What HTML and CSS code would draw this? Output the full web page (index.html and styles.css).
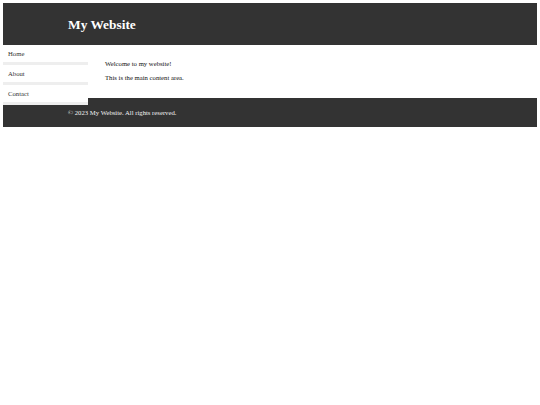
FILE: index.html
```html
<!DOCTYPE html>
<html lang="en">
<head>
<meta charset="utf-8">
<title>My Website</title>
<link rel="stylesheet" href="styles.css">
</head>
<body>
<header class="site-header">
  <h1 class="site-title">My Website</h1>
</header>
<nav class="sidebar">
  <ul class="nav-list">
    <li class="nav-item">Home</li>
    <li class="nav-item">About</li>
    <li class="nav-item">Contact</li>
  </ul>
</nav>
<main class="content">
  <p class="content-text">Welcome to my website!</p>
  <p class="content-text">This is the main content area.</p>
</main>
<footer class="site-footer">
  <p class="footer-text">&copy; 2023 My Website. All rights reserved.</p>
</footer>
</body>
</html>
```

FILE: styles.css
```css
html, body {
  background: #ffffff;
}
body {
  margin: 3px;
  font-family: "Liberation Serif", "Times New Roman", serif;
  font-size: 6.7px;
  line-height: 7.6px;
  color: #222222;
}
.site-header {
  height: 42px;
  background: #333333;
  display: flex;
  align-items: center;
  padding-left: 65px;
}
.site-title {
  margin: 0;
  font-size: 13.4px;
  line-height: 15px;
  font-weight: bold;
  color: #ffffff;
}
.sidebar {
  float: left;
  width: 85px;
}
.nav-list {
  list-style: none;
  margin: 0;
  padding: 0;
}
.nav-item {
  height: 17px;
  line-height: 17px;
  padding-left: 5px;
  background: #ffffff;
  border-bottom: 3px solid #eeeeee;
  color: #333333;
}
.content {
  margin-left: 85px;
  padding: 15px 0 16.4px 17px;
}
.content-text {
  margin: 0 0 6.6px;
  color: #111111;
}
.content-text:last-child {
  margin-bottom: 0;
}
.site-footer {
  background: #333333;
  padding: 10.7px 0 10.7px 65px;
}
.footer-text {
  margin: 0;
  color: #f2f2f2;
}
```
